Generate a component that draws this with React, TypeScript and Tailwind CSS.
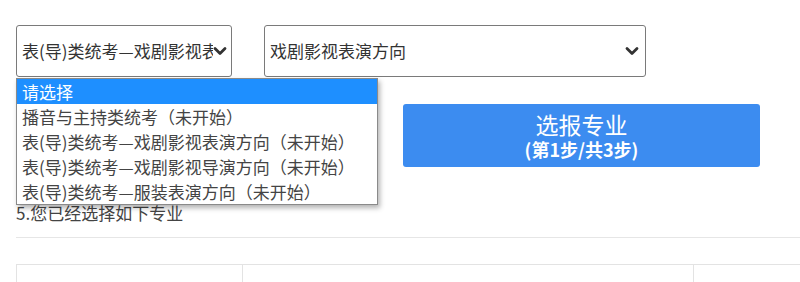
const options = [
  "请选择",
  "播音与主持类统考（未开始）",
  "表(导)类统考—戏剧影视表演方向（未开始）",
  "表(导)类统考—戏剧影视导演方向（未开始）",
  "表(导)类统考—服装表演方向（未开始）",
];

function Chevron() {
  return (
    <svg width="14" height="10" viewBox="0 0 14 10" className="shrink-0">
      <path d="M2 2.5 L7 7.5 L12 2.5" fill="none" stroke="#333" strokeWidth="2.8" strokeLinecap="round" strokeLinejoin="round" />
    </svg>
  );
}

export default function App() {
  return (
    <div
      className="w-[800px] h-[282px] overflow-hidden bg-white pl-4 pt-[25px] text-[17px] text-[#333]"
      style={{ fontFamily: '"Noto Sans CJK SC", "Noto Sans", sans-serif' }}
    >
      <div className="flex gap-8">
        <div className="relative">
          <div className="flex items-center w-[216px] h-[52px] border border-[#7a7a7a] rounded-[3px] pl-[5px] pr-[4px]">
            <span className="flex-1 overflow-hidden whitespace-nowrap leading-[22px]">表(导)类统考—戏剧影视表演方向</span>
            <Chevron />
          </div>
          <div className="absolute left-0 top-[53px] z-10 w-[362px] border border-[#8a8a8a] bg-white shadow-[2px_3px_5px_rgba(0,0,0,0.3)]">
            {options.map((o, i) => (
              <div
                key={o}
                className={
                  "h-[25px] pl-[5px] leading-[25px] whitespace-nowrap " +
                  (i === 0 ? "bg-[#1e8fff] text-white" : "text-[#444]")
                }
              >
                {o}
              </div>
            ))}
          </div>
        </div>
        <div className="flex items-center w-[382px] h-[52px] border border-[#7a7a7a] rounded-[3px] pl-[5px] pr-[6px]">
          <span className="flex-1 leading-[22px]">戏剧影视表演方向</span>
          <Chevron />
        </div>
      </div>

      <div className="mt-[27px] ml-[387px] w-[357px] h-[63px] rounded-[3px] bg-[#3c8cf0] text-white flex flex-col items-center justify-center">
        <div className="text-[23px] leading-[28px]">选报专业</div>
        <div className="text-[18px] leading-[23px] font-bold">(第1步/共3步)</div>
      </div>

      <div className="mt-[35px] leading-[22px] text-[#444]">5.您已经选择如下专业</div>

      <div className="mt-[13px] border-t border-[#e6e6e6]" />

      <div className="mt-[26px] flex h-[40px] border-t border-l border-[#e3e3e3]">
        <div className="w-[226px] border-r border-[#e3e3e3]" />
        <div className="w-[451px] border-r border-[#e3e3e3]" />
        <div className="flex-1" />
      </div>
    </div>
  );
}
